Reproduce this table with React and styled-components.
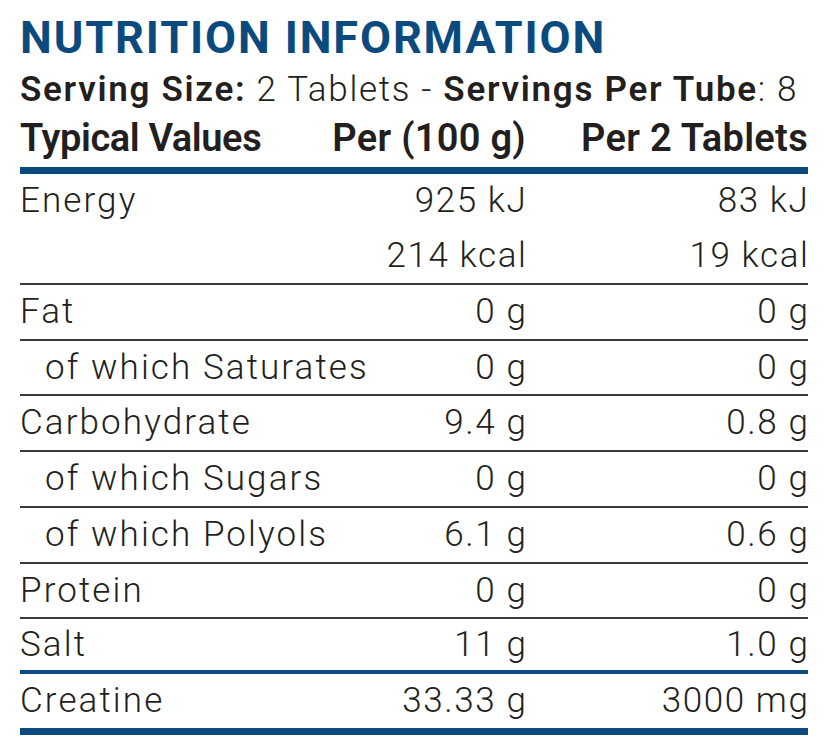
import React from "react";
import styled, { createGlobalStyle } from "styled-components";

const BLUE = "#0b4a7e";
const INK = "#231f20";

const GlobalStyle = createGlobalStyle`
  html, body {
    margin: 0;
    padding: 0;
    background: #ffffff;
  }
  body {
    font-family: Roboto, "Noto Sans", sans-serif;
    color: ${INK};
  }
`;

const Panel = styled.div`
  width: 788px;
  padding: 0 22px 0 20px;
`;

const Title = styled.h1`
  margin: 0;
  padding-top: 14px;
  font-size: 45px;
  line-height: 48px;
  font-weight: 700;
  color: ${BLUE};
  letter-spacing: 1.9px;
`;

const Serving = styled.div`
  padding-top: 5px;
  font-size: 35px;
  line-height: 46px;
  font-weight: 300;
  letter-spacing: 1.7px;
  white-space: nowrap;
`;

const Strong = styled.span`
  font-weight: 600;
`;

const Row = styled.div`
  display: grid;
  grid-template-columns: minmax(0, 1fr) 200px 282px;
  align-items: start;
  border-bottom: ${({ $rule }) =>
    $rule === "thick"
      ? `7px solid ${BLUE}`
      : $rule === "blue"
      ? `4px solid ${BLUE}`
      : `2px solid #3a3a3a`};
`;

const HeadRow = styled(Row)`
  font-size: 38px;
  line-height: 50px;
  font-weight: 600;
  padding-bottom: 4px;
`;

const BodyRow = styled(Row)`
  font-size: 35px;
  font-weight: 300;
  line-height: ${({ $h }) => $h || 53.7}px;
`;

const Label = styled.div`
  padding-left: ${({ $sub }) => ($sub ? 25 : 0)}px;
  white-space: nowrap;
  letter-spacing: ${({ $head }) => ($head ? -0.4 : 2.1)}px;
`;

const Value = styled.div`
  text-align: right;
  white-space: nowrap;
  letter-spacing: ${({ $head }) => ($head ? 0.3 : 1.6)}px;
  margin-right: ${({ $head }) => ($head ? 0 : -1.5)}px;
`;

const rows = [
  { label: "Fat", a: "0 g", b: "0 g" },
  { label: "of which Saturates", a: "0 g", b: "0 g", sub: true },
  { label: "Carbohydrate", a: "9.4 g", b: "0.8 g" },
  { label: "of which Sugars", a: "0 g", b: "0 g", sub: true },
  { label: "of which Polyols", a: "6.1 g", b: "0.6 g", sub: true },
  { label: "Protein", a: "0 g", b: "0 g" },
  { label: "Salt", a: "11 g", b: "1.0 g", h: 51, rule: "blue" },
  { label: "Creatine", a: "33.33 g", b: "3000 mg", h: 54, rule: "thick" },
];

export default function App() {
  return (
    <>
      <GlobalStyle />
      <Panel>
        <Title>NUTRITION INFORMATION</Title>
        <Serving>
          <Strong>Serving Size:</Strong> 2 Tablets - <Strong>Servings Per Tube</Strong>: 8
        </Serving>
        <HeadRow $rule="thick">
          <Label $head>Typical Values</Label>
          <Value $head>Per (100 g)</Value>
          <Value $head>Per 2 Tablets</Value>
        </HeadRow>
        <BodyRow $h={54.5}>
          <Label>Energy</Label>
          <Value>
            925 kJ
            <br />
            214 kcal
          </Value>
          <Value>
            83 kJ
            <br />
            19 kcal
          </Value>
        </BodyRow>
        {rows.map((r) => (
          <BodyRow key={r.label} $h={r.h} $rule={r.rule}>
            <Label $sub={r.sub}>{r.label}</Label>
            <Value>{r.a}</Value>
            <Value>{r.b}</Value>
          </BodyRow>
        ))}
      </Panel>
    </>
  );
}
